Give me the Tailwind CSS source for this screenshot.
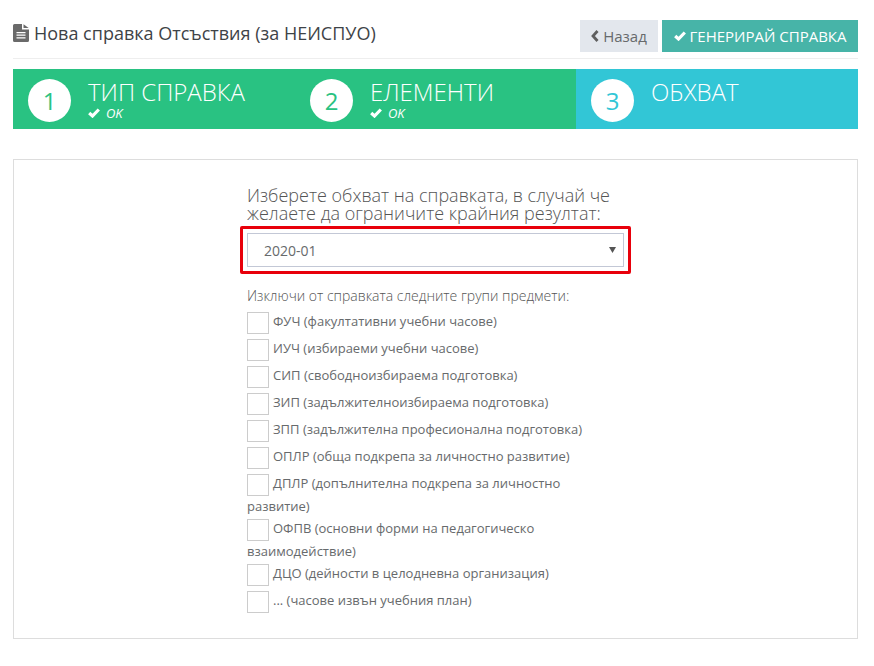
<!DOCTYPE html>
<html lang="bg">
<head>
    <meta charset="UTF-8" />
    <title>Нова справка</title>
    <script src="https://cdn.jsdelivr.net/npm/@tailwindcss/browser@4"></script>
</head>
<body class="bg-white font-['Open_Sans',sans-serif] text-[#676a6c]">
    <div class="w-[874px] h-[666px] overflow-hidden px-[13px] pt-[20px]">
        <!-- Header -->
        <div class="w-[845px] h-[39px] flex justify-between items-start border-b border-[#eeeeee]">
            <div class="flex items-center gap-[5px] h-[26px] text-[18px] text-[#3e4347]">
                <svg class="w-[16px] h-[18px]" viewBox="0 0 16 18"><path fill="#6a6a6a" d="M0 1.500A1.500 1.500 0 0 1 1.500 0H9v5.500h7v11a1.500 1.500 0 0 1-1.500 1.500h-13A1.500 1.500 0 0 1 0 16.500z"/><path fill="#6a6a6a" d="M10.500 0.300 15.700 4h-5.200z"/><path fill="#fff" d="M3.500 8h9v1.200h-9zM3.500 10.600h9v1.200h-9zM3.500 13.200h9v1.200h-9z"/></svg>
                <span>Нова справка Отсъствия (за НЕИСПУО)</span>
            </div>
            <div class="flex gap-[4px]">
                <button class="h-[32px] w-[78px] bg-[#e3e7ed] text-[#676a6c] text-[15px] flex items-center justify-center gap-[4px]">
                    <svg class="w-[8px] h-[12px]" viewBox="0 0 8 12"><path d="M6.500 1 2 6l4.500 5" fill="none" stroke="#5f5f5f" stroke-width="2.800"/></svg>
                    <span>Назад</span>
                </button>
                <button class="h-[32px] w-[196px] bg-[#47b4a8] text-white text-[15px] flex items-center justify-center gap-[4px]">
                    <svg class="w-[12px] h-[10px]" viewBox="0 0 12 10"><path d="M1.200 5 4.500 8 10.800 1.500" fill="none" stroke="#fff" stroke-width="3.200"/></svg>
                    <span>ГЕНЕРИРАЙ СПРАВКА</span>
                </button>
            </div>
        </div>

        <!-- Steps -->
        <div class="mt-[10px] w-[845px] h-[60px] flex">
            <div class="w-[282px] bg-[#29c282] flex pl-[15px] pt-[10px]">
                <div class="w-[43px] h-[43px] rounded-full bg-white text-[#29c282] text-[24px] flex items-center justify-center">1</div>
                <div class="ml-[17px] text-white">
                    <div class="text-[24px] font-light leading-[26px]">ТИП СПРАВКА</div>
                    <div class="flex items-center gap-[6px] text-[13px] italic leading-[14px] mt-[1px]">
                        <svg class="w-[12px] h-[10px]" viewBox="0 0 12 10"><path d="M1.200 5 4.500 8 10.800 1.500" fill="none" stroke="#fff" stroke-width="3.200"/></svg><span>OK</span>
                    </div>
                </div>
            </div>
            <div class="w-[281px] bg-[#29c282] flex pl-[15px] pt-[10px]">
                <div class="w-[43px] h-[43px] rounded-full bg-white text-[#29c282] text-[24px] flex items-center justify-center">2</div>
                <div class="ml-[17px] text-white">
                    <div class="text-[24px] font-light leading-[26px]">ЕЛЕМЕНТИ</div>
                    <div class="flex items-center gap-[6px] text-[13px] italic leading-[14px] mt-[1px]">
                        <svg class="w-[12px] h-[10px]" viewBox="0 0 12 10"><path d="M1.200 5 4.500 8 10.800 1.500" fill="none" stroke="#fff" stroke-width="3.200"/></svg><span>OK</span>
                    </div>
                </div>
            </div>
            <div class="w-[282px] bg-[#32c6d6] flex pl-[15px] pt-[10px]">
                <div class="w-[43px] h-[43px] rounded-full bg-white text-[#32c6d6] text-[24px] flex items-center justify-center">3</div>
                <div class="ml-[17px] text-white text-[24px] font-light leading-[26px]">ОБХВАТ</div>
            </div>
        </div>

        <!-- Panel -->
        <div class="mt-[30px] w-[845px] h-[480px] border border-[#dddddd] pl-[233px] pt-[26px]">
            <div class="w-[384px]">
                <div class="text-[18px] font-light leading-[18px] text-[#555]">Изберете обхват на справката, в случай че<br>желаете да ограничите крайния резултат:</div>
                <div class="relative mt-[11px] w-[377px] h-[34px]">
                    <div class="absolute -left-[7px] -top-[7px] w-[391px] h-[48px] border-[3px] border-[#e8000b] rounded-[2px]"></div>
                    <div class="w-full h-full border border-[#c3c8d6] pl-[16px] flex items-center text-[14px] text-[#676a6c]">2020-01</div>
                    <svg class="absolute right-[8px] top-[14px] w-[7px] h-[6px]" viewBox="0 0 7 6"><path d="M0 0h7L3.500 6z" fill="#555"/></svg>
                </div>
                <div class="mt-[20px] text-[14px] font-light leading-[18px] text-[#555]">Изключи от справката следните групи предмети:</div>
                <div class="mt-[5px] text-[13px] leading-[22.500px] w-[345px]">
                    <div class="min-h-[27px]"><span class="relative top-[2px] inline-block w-[22px] h-[22px] border border-[#cccccc] align-top mr-[4px]"></span>ФУЧ (факултативни учебни часове)</div>
                    <div class="min-h-[27px]"><span class="relative top-[2px] inline-block w-[22px] h-[22px] border border-[#cccccc] align-top mr-[4px]"></span>ИУЧ (избираеми учебни часове)</div>
                    <div class="min-h-[27px]"><span class="relative top-[2px] inline-block w-[22px] h-[22px] border border-[#cccccc] align-top mr-[4px]"></span>СИП (свободноизбираема подготовка)</div>
                    <div class="min-h-[27px]"><span class="relative top-[2px] inline-block w-[22px] h-[22px] border border-[#cccccc] align-top mr-[4px]"></span>ЗИП (задължителноизбираема подготовка)</div>
                    <div class="min-h-[27px]"><span class="relative top-[2px] inline-block w-[22px] h-[22px] border border-[#cccccc] align-top mr-[4px]"></span>ЗПП (задължителна професионална подготовка)</div>
                    <div class="min-h-[27px]"><span class="relative top-[2px] inline-block w-[22px] h-[22px] border border-[#cccccc] align-top mr-[4px]"></span>ОПЛР (обща подкрепа за личностно развитие)</div>
                    <div class="min-h-[27px]"><span class="relative top-[2px] inline-block w-[22px] h-[22px] border border-[#cccccc] align-top mr-[4px]"></span>ДПЛР (допълнителна подкрепа за личностно развитие)</div>
                    <div class="min-h-[27px]"><span class="relative top-[2px] inline-block w-[22px] h-[22px] border border-[#cccccc] align-top mr-[4px]"></span>ОФПВ (основни форми на педагогическо взаимодействие)</div>
                    <div class="min-h-[27px]"><span class="relative top-[2px] inline-block w-[22px] h-[22px] border border-[#cccccc] align-top mr-[4px]"></span>ДЦО (дейности в целодневна организация)</div>
                    <div class="min-h-[27px]"><span class="relative top-[2px] inline-block w-[22px] h-[22px] border border-[#cccccc] align-top mr-[4px]"></span>... (часове извън учебния план)</div>
                </div>
            </div>
        </div>
    </div>
</body>
</html>
